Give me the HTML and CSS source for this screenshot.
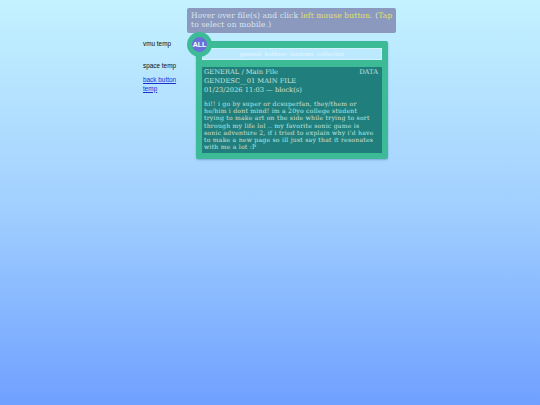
FILE: index.html
```html
<!DOCTYPE html>
<html lang="en">

<head>
	<meta charset="UTF-8">
	<title>vmu temp</title>
	<link rel="stylesheet" href="styles.css">
</head>

<body>
	<div class="page">
		<!-- left links -->
		<div class="side">
			<p class="vmu">vmu temp</p>
			<p class="space">space temp</p>
			<a class="back" href="#">back button temp</a>
		</div>
		<div class="main">
			<div class="hint">Hover over file(s) and click <span class="yellow">left mouse button.</span> (<span class="yellow">Tap</span> to select on mobile.)</div>
			<div class="panel">
				<div class="all">ALL</div>
				<div class="tabs">general&nbsp; hobbies&nbsp; fandoms&nbsp; collection</div>
				<div class="file">
					<div class="file-top"><span>GENERAL / Main File</span><span>DATA</span></div>
					<div>GENDESC__01 MAIN FILE</div>
					<div>01/23/2026 11:03 — block(s)</div>
					<p class="bio">hi!! i go by super or dcsuperfan, they/them or<br>he/him i dont mind! im a 20yo college student<br>trying to make art on the side while trying to sort<br>through my life lol .. my favorite sonic game is<br>sonic adventure 2, if i tried to explain why i'd have<br>to make a new page so ill just say that it resonates<br>with me a lot :P</p>
				</div>
			</div>
		</div>
	</div>
</body>

</html>
```
FILE: styles.css
```css
html {
	height: 100%
}

body {
	margin: 0;
	height: 405px;
	overflow: hidden;
	background: linear-gradient(#c4f2ff, #a2d0ff 50%, #6fa0ff);
	font-family: "Liberation Sans", sans-serif
}

.page {
	display: flex;
	padding: 8px 0 0 143px
}

.side {
	width: 44px;
	padding-top: 32px;
	font-size: 6.4px;
	line-height: 8.5px;
	color: #111
}

.side p {
	margin: 0
}

.vmu {
	padding-bottom: 13px
}

.space {
	padding-bottom: 6px
}

.back {
	display: block;
	color: #1a2fd0;
	width: 38px
}

.main {
	width: 209px;
	font-family: "DejaVu Serif", serif
}

.hint {
	height: 25px;
	box-sizing: border-box;
	padding: 3px 2px 3px 4px;
	background: #8a99bd;
	border-radius: 2px;
	color: #dbe5ef;
	font-size: 7.5px;
	line-height: 9px;
	letter-spacing: .14px
}

.yellow {
	color: #e4e06a
}

.panel {
	position: relative;
	width: 180px;
	margin: 8px 0 0 9px;
	padding: 7px 6px 6px;
	background: #3cbb96;
	border-radius: 2px;
	box-shadow: 0 1px 2px rgba(60, 100, 160, .4)
}

.all {
	position: absolute;
	top: -9px;
	left: -9px;
	width: 15px;
	height: 15px;
	border: 5px solid #3cbb96;
	border-radius: 50%;
	background: #6a70d8;
	color: #fff;
	font: bold 7px/15px "Liberation Sans", sans-serif;
	text-align: center
}

.tabs {
	height: 12px;
	box-sizing: border-box;
	border: 1px solid #d0f2fa;
	background: #bde9ff;
	color: #e4f7ff;
	font-size: 5.5px;
	line-height: 10px;
	text-align: center
}

.file {
	margin-top: 7px;
	height: 86px;
	box-sizing: border-box;
	padding: 1px 4px 1px 2px;
	background: #207f7c;
	color: #c8e2dc;
	font-size: 6.7px;
	line-height: 9.2px
}

.file-top {
	display: flex;
	justify-content: space-between
}

.bio {
	margin: 4px -3px 0 0;
	font-size: 6.1px;
	line-height: 7.3px;
	letter-spacing: .24px;
	white-space: nowrap
}
```
